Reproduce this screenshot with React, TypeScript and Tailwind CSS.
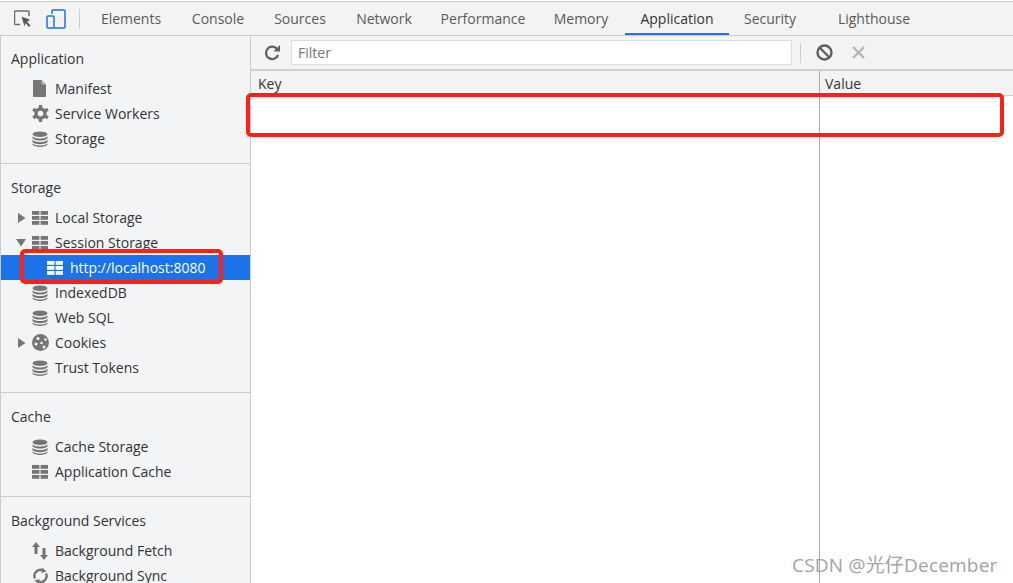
import { ReactNode } from "react";

const font = "[font-family:'Open_Sans','Noto_Sans_CJK_SC',sans-serif]";

const Db = ({ c = "#757575" }: { c?: string }) => (
  <svg width="16" height="16" viewBox="0 0 16 16" fill={c}>
    <ellipse cx="8" cy="3.2" rx="7.5" ry="2.8" />
    <path d="M.5 5.2C1.5 7 5 7.4 8 7.4s6.500-.4 7.500-2.200V7.300C14.500 9 11 9.600 8 9.600S1.500 9 .5 7.300zM.5 8.700C1.500 10.500 5 11 8 11s6.500-.5 7.500-2.300V11C14.500 12.700 11 13.200 8 13.200S1.500 12.700.5 11zM.5 12.200C1.500 14 5 14.400 8 14.400s6.500-.4 7.500-2.200v1.300C14.500 15.300 11 15.900 8 15.900S1.500 15.300.5 13.500z" />
  </svg>
);

const Grid = ({ c = "#757575" }: { c?: string }) => (
  <svg width="16" height="14" viewBox="0 0 16 14" fill={c}>
    <rect x="0" y="0" width="7.400" height="3.800" />
    <rect x="8.600" y="0" width="7.400" height="3.800" />
    <rect x="0" y="5" width="7.400" height="3.800" />
    <rect x="8.600" y="5" width="7.400" height="3.800" />
    <rect x="0" y="10" width="7.400" height="3.800" />
    <rect x="8.600" y="10" width="7.400" height="3.800" />
  </svg>
);

const Doc = () => (
  <svg width="14" height="17" viewBox="0 0 14 17" fill="#757575">
    <path d="M1 0h7.500L13 4.500V16a1 1 0 0 1-1 1H1a1 1 0 0 1-1-1V1a1 1 0 0 1 1-1z" />
    <path d="M8.500 0v4.500H13z" fill="#b5b5b5" />
  </svg>
);

const Gear = () => (
  <svg width="17" height="17" viewBox="0 0 18 18">
    <circle cx="9" cy="9" r="4.800" fill="none" stroke="#757575" strokeWidth="3.600" />
    <path
      d="M9 0v3.500M9 14.500V18M16.800 4.500l-3 1.750M4.200 11.750l-3 1.750M1.200 4.500l3 1.750M13.800 11.750l3 1.750"
      stroke="#757575"
      strokeWidth="3.600"
    />
  </svg>
);

const Cookie = () => (
  <svg width="17" height="17" viewBox="0 0 17 17">
    <circle cx="8.500" cy="8.500" r="8.500" fill="#757575" />
    <circle cx="6" cy="4.500" r="1.600" fill="#f3f4f6" />
    <circle cx="4" cy="10" r="1.500" fill="#f3f4f6" />
    <circle cx="9.500" cy="9" r="1.300" fill="#f3f4f6" />
    <circle cx="12" cy="13" r="1.500" fill="#f3f4f6" />
    <circle cx="13.500" cy="5.500" r="1.300" fill="#f3f4f6" />
  </svg>
);

const Fetch = () => (
  <svg width="16" height="18" viewBox="0 0 16 18" fill="#757575">
    <path d="M4 0l4 5H5.500v7h-3V5H0zM12 18l-4-5h2.500V6h3v7H16z" />
  </svg>
);

const Sync = () => (
  <svg width="15" height="18" viewBox="0 0 15 18" fill="none" stroke="#757575" strokeWidth="2.400">
    <path d="M2 11.500A6 6 0 0 1 10.500 3.800M13 6.500A6 6 0 0 1 4.500 14.200" />
    <path d="M9 0.500l4.500 4-5 1.500zM6 17.500l-4.500-4 5-1.500z" fill="#757575" stroke="none" />
  </svg>
);

const Right = () => (
  <svg width="8" height="10" viewBox="0 0 8 10" fill="#757575">
    <path d="M0 0l7.500 5L0 10z" />
  </svg>
);

const Down = () => (
  <svg width="10" height="8" viewBox="0 0 10 8" fill="#757575">
    <path d="M0 0h10L5 7.500z" />
  </svg>
);

function Row({ icon, label, arrow }: { icon: ReactNode; label: string; arrow?: ReactNode }) {
  return (
    <div className="h-[25px] flex items-center text-[14px] text-[#333] whitespace-nowrap">
      <span className="w-[30px] flex justify-end pr-[5px] shrink-0">{arrow}</span>
      <span className="w-[20px] flex justify-center shrink-0 -ml-[1px]">{icon}</span>
      <span className="ml-[5px]">{label}</span>
    </div>
  );
}

function Heading({ children }: { children: ReactNode }) {
  return <div className="h-[30px] mb-[3px] pl-[10px] flex items-center text-[14px] text-[#333]">{children}</div>;
}

const tabs = [
  { label: "Elements", w: "w-[88px]" },
  { label: "Console", w: "w-[86px]" },
  { label: "Sources", w: "w-[78px]" },
  { label: "Network", w: "w-[90px]" },
  { label: "Performance", w: "w-[108px]" },
  { label: "Memory", w: "w-[88px]" },
  { label: "Application", w: "w-[104px]" },
  { label: "Security", w: "w-[82px]" },
  { label: "Lighthouse", w: "w-[126px]" },
];

export default function App() {
  return (
    <div className={`relative w-[1013px] h-[583px] overflow-hidden bg-white flex flex-col ${font}`}>
      {/* top bar */}
      <div className="h-[35px] shrink-0 mt-px bg-[#f3f3f3] border-t border-b border-[#cccccc] flex items-center text-[14px] text-[#5a5a5a]">
        <div className="flex items-center pl-[14px] w-[87px] shrink-0">
          <svg width="18" height="18" viewBox="0 0 18 18" fill="none">
            <path d="M6 14.500H1.500a1 1 0 0 1-1-1V2a1 1 0 0 1 1-1H14a1 1 0 0 1 1 1v4" stroke="#6e6e6e" strokeWidth="1.500" />
            <path d="M7.500 6.500l9 3.500-3.500 1.500 3.500 4-1.500 1.500-3.500-4-1 3.500z" fill="#5a5a5a" />
          </svg>
          <svg className="ml-[14px]" width="20" height="20" viewBox="0 0 20 20" fill="none" stroke="#1a73e8" strokeWidth="1.500">
            <path d="M6 5V2a1 1 0 0 1 1-1h11a1 1 0 0 1 1 1v16a1 1 0 0 1-1 1H8" />
            <rect x="1" y="7" width="7" height="12" rx="1" />
          </svg>
          <div className="ml-[13px] w-px h-[20px] bg-[#cccccc]" />
        </div>
        <div className="flex h-full">
          {tabs.map(t => (
            <div
              key={t.label}
              className={`${t.w} h-full flex items-center justify-center relative ${t.label === "Application" ? "text-[#333]" : ""}`}
            >
              {t.label}
              {t.label === "Application" && <div className="absolute left-0 right-0 bottom-0 h-[2px] bg-[#1a73e8]" />}
            </div>
          ))}
        </div>
      </div>

      <div className="flex-1 flex min-h-0">
        {/* sidebar */}
        <div className="w-[251px] shrink-0 bg-[#f3f4f6] border-l border-r border-[#cccccc] overflow-hidden">
          <div className="pt-[7px] pb-[12px] border-b border-[#cccccc]">
            <Heading>Application</Heading>
            <Row icon={<Doc />} label="Manifest" />
            <Row icon={<Gear />} label="Service Workers" />
            <Row icon={<Db />} label="Storage" />
          </div>
          <div className="pt-[8px] pb-[12px] border-b border-[#cccccc]">
            <Heading>Storage</Heading>
            <Row arrow={<Right />} icon={<Grid />} label="Local Storage" />
            <Row arrow={<Down />} icon={<Grid />} label="Session Storage" />
            <div className="h-[25px] bg-[#1a73e8] text-white text-[14px] flex items-center pl-[46px]">
              <Grid c="#ffffff" />
              <span className="ml-[7px]">http://localhost:8080</span>
            </div>
            <Row icon={<Db />} label="IndexedDB" />
            <Row icon={<Db />} label="Web SQL" />
            <Row arrow={<Right />} icon={<Cookie />} label="Cookies" />
            <Row icon={<Db />} label="Trust Tokens" />
          </div>
          <div className="pt-[8px] pb-[12px] border-b border-[#cccccc]">
            <Heading>Cache</Heading>
            <Row icon={<Db />} label="Cache Storage" />
            <Row icon={<Grid />} label="Application Cache" />
          </div>
          <div className="pt-[8px]">
            <Heading>Background Services</Heading>
            <Row icon={<Fetch />} label="Background Fetch" />
            <Row icon={<Sync />} label="Background Sync" />
          </div>
        </div>

        {/* main */}
        <div className="flex-1 min-w-0 flex flex-col">
          <div className="h-[35px] shrink-0 bg-[#f3f3f3] border-b-2 border-[#d0d0d0] flex items-center">
            <svg className="ml-[13px]" width="17" height="17" viewBox="0 0 17 17" fill="none">
              <path d="M14 11a6.200 6.200 0 1 1-.6-5.500" stroke="#5f5f5f" strokeWidth="2.300" />
              <path d="M16 1v6.500H9.500z" fill="#5f5f5f" />
            </svg>
            <div className="ml-[10px] w-[501px] h-[25px] bg-white border border-[#dddddd] flex items-center pl-[6px] text-[14px] text-[#757575]">
              Filter
            </div>
            <div className="ml-[8px] w-px h-[20px] bg-[#cccccc]" />
            <svg className="ml-[15px]" width="17" height="17" viewBox="0 0 17 17" fill="none" stroke="#5f5f5f" strokeWidth="2.400">
              <circle cx="8.500" cy="8.500" r="7" />
              <path d="M3.500 3.500l10 10" />
            </svg>
            <svg className="ml-[19px]" width="13" height="13" viewBox="0 0 13 13" fill="none" stroke="#b4b4b4" strokeWidth="2.200">
              <path d="M1 1l11 11M12 1L1 12" />
            </svg>
          </div>
          <div className="h-[25px] shrink-0 bg-[#f3f3f3] border-b border-[#d0d0d0] flex text-[14px] text-[#333]">
            <div className="w-[569px] pl-[7px] flex items-center border-r border-[#aaaaaa]">Key</div>
            <div className="pl-[5px] flex items-center">Value</div>
          </div>
          <div className="flex-1 flex">
            <div className="w-[569px] border-r border-[#aaaaaa]" />
          </div>
        </div>
      </div>

      {/* annotations */}
      <div className="absolute left-[246px] top-[93px] w-[758px] h-[44px] border-[4px] border-[#ff2016] rounded-[5px]" />
      <div className="absolute left-[20px] top-[249px] w-[203px] h-[35px] border-[4px] border-[#ff2016] rounded-[5px]" />
      <div className="absolute left-[792px] top-[552px] text-[19px] tracking-[0.2px] leading-[26px] text-[#a3a3a3] whitespace-nowrap">
        CSDN @光仔December
      </div>
    </div>
  );
}
